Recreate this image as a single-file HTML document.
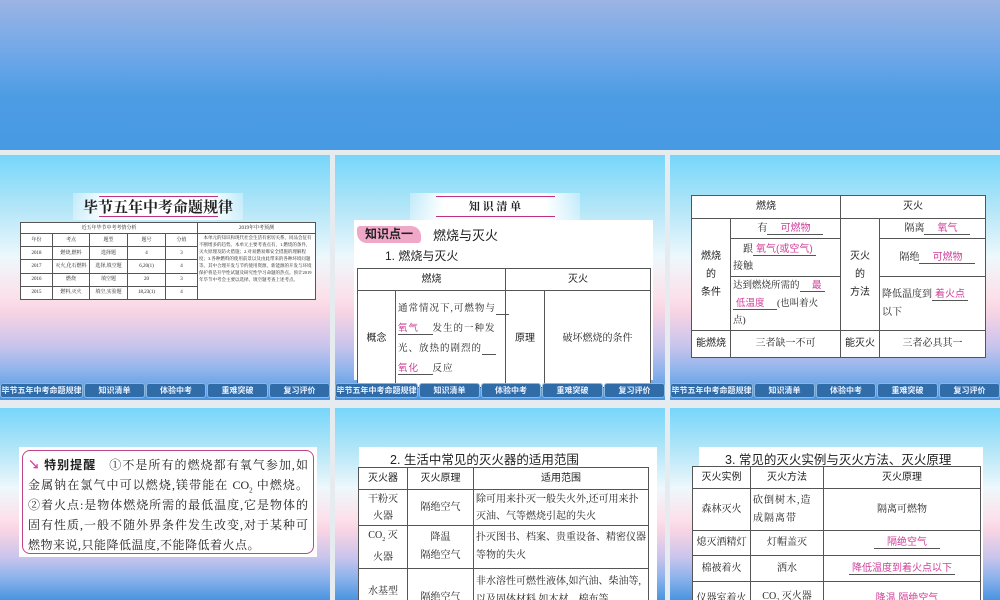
<!DOCTYPE html>
<html><head><meta charset="utf-8"><style>
*{margin:0;padding:0;box-sizing:border-box}
body{width:1000px;height:600px;overflow:hidden;background:#e6ebef;position:relative;font-family:"Liberation Serif","Noto Serif CJK SC",serif;color:#222}
.top{position:absolute;left:0;top:0;width:1000px;height:150px;background:linear-gradient(#9cb4e4 0%,#6aa6e8 40%,#4c9ce4 65%,#479ae2 100%)}
.s{position:absolute;width:330px;height:245px;overflow:hidden;background:linear-gradient(#76d6fa 0%,#b4e6f8 22%,#eef8fc 42%,#fce0ea 58%,#f8d4e4 64%,#c8c4ec 78%,#8eb4ec 88%,#4a94e0 100%)}
.a{position:absolute}
.nav{position:absolute;left:0;top:228px;width:330px;height:17px}
.nav div{position:absolute;top:0;height:15px;background:#306ca8;border:1px solid #8ab8e0;border-radius:3px;color:#e8f0ff;font:bold 8px "Liberation Sans","Noto Sans CJK SC",sans-serif;text-align:center;line-height:13px}
.ban{position:absolute;height:27px;background:linear-gradient(90deg,rgba(255,255,255,.3),#fff 20%,#fff 80%,rgba(255,255,255,.3));text-align:center;font:bold 14px "Noto Serif CJK SC",serif;color:#222;line-height:27px}
.ban:before,.ban:after{content:"";position:absolute;left:15%;right:15%;height:1px;background:#c03080}
.ban:before{top:3px}.ban:after{bottom:3px}
table{border-collapse:collapse;position:absolute;background:#fff;table-layout:fixed}
td{border:1px solid #555;text-align:center;font-size:10px;line-height:14px;padding:0 2px}
.h td{font-family:"Liberation Sans","Noto Sans CJK SC",sans-serif}
.sans{font-family:"Liberation Sans","Noto Sans CJK SC",sans-serif}
.pk{color:#d0409a;border-bottom:1px solid #555;padding:0 3px;font-family:"Liberation Sans","Noto Sans CJK SC",sans-serif}
.ln{white-space:nowrap;text-align:justify;text-align-last:justify;height:20px}
.t1 td{font-size:5px;line-height:7px;padding:0 1px}
</style></head><body>
<div class="top"></div>

<!-- slide 1 -->
<div class="s" style="left:0;top:155px">
 <div class="ban" style="left:73px;top:38px;width:170px;font-size:15px">毕节五年中考命题规律</div>
 <table class="t1" style="left:20px;top:67px;width:295px;height:78px">
  <colgroup><col style="width:32px"><col style="width:37px"><col style="width:38px"><col style="width:38px"><col style="width:32px"><col style="width:118px"></colgroup>
  <tr style="height:11px"><td colspan="5">近五年毕节中考考情分析</td><td>2019年中考预测</td></tr>
  <tr><td>年份</td><td>考点</td><td>题型</td><td>题号</td><td>分值</td><td rowspan="5" style="font-size:4.5px;line-height:7px;text-align:left;vertical-align:top">　本单元的知识和现代社会生活有密切关系，同品会征有不断增多的趋势。本单元主要考查点有，1.燃烧的条件，灭火原理及防火措施；2.对易燃易爆安全措施的理解程度；3.各种燃料的使用前景以及由此带来的各种环境问题等。其中合理开发与节约使用资源，新能源的开发与环境保护将是升学性试题及研究性学习命题的热点。预计2019年毕节中考会主要以选择、填空题考查上述考点。</td></tr>
  <tr><td>2018</td><td>燃烧,燃料</td><td>选择题</td><td>4</td><td>3</td></tr>
  <tr><td>2017</td><td style="white-space:nowrap">灭火,化石燃料</td><td>选择,填空题</td><td>6,20(1)</td><td>4</td></tr>
  <tr><td>2016</td><td>燃烧</td><td>填空题</td><td>20</td><td>3</td></tr>
  <tr><td>2015</td><td>燃料,灭火</td><td>填空,实验题</td><td>18,23(1)</td><td>4</td></tr>
 </table>
 <div class="nav"><div style="left:0;width:83px">毕节五年中考命题规律</div><div style="left:84px;width:61px">知识清单</div><div style="left:146px;width:60px">体验中考</div><div style="left:207px;width:61px">重难突破</div><div style="left:269px;width:61px">复习评价</div></div>
</div>

<!-- slide 2 -->
<div class="s" style="left:335px;top:155px">
 <div class="ban" style="left:75px;top:38px;width:170px;font-size:11px">知 识 清 单</div>
 <div class="a" style="left:19px;top:65px;width:299px;height:160px;background:#fff"></div>
 <div class="a sans" style="left:22px;top:71px;width:64px;height:17px;background:#f0a8c8;border-radius:3px 10px 3px 10px;font-weight:bold;font-size:12px;line-height:17px;text-align:center;color:#222">知识点一</div>
 <div class="a sans" style="left:98px;top:70px;font-size:13px">燃烧与灭火</div>
 <div class="a sans" style="left:50px;top:92px;font-size:12px">1. 燃烧与灭火</div>
 <table style="left:22px;top:113px;width:293px;height:120px">
  <colgroup><col style="width:38px"><col style="width:110px"><col style="width:39px"><col style="width:106px"></colgroup>
  <tr class="h" style="height:22px"><td colspan="2">燃烧</td><td colspan="2">灭火</td></tr>
  <tr><td class="sans">概念</td><td style="text-align:left;line-height:20px;letter-spacing:1px;font-size:9.5px">通常情况下,可燃物与<span class="pk">　氧气　</span>发生的一种发光、放热的剧烈的<span class="pk">　氧化　</span>反应</td><td class="sans">原理</td><td>破坏燃烧的条件</td></tr>
 </table>
 <div class="nav"><div style="left:0;width:83px">毕节五年中考命题规律</div><div style="left:84px;width:61px">知识清单</div><div style="left:146px;width:60px">体验中考</div><div style="left:207px;width:61px">重难突破</div><div style="left:269px;width:61px">复习评价</div></div>
</div>

<!-- slide 3 -->
<div class="s" style="left:670px;top:155px">
 <table style="left:21px;top:40px;width:294px;height:163px">
  <colgroup><col style="width:39px"><col style="width:110px"><col style="width:39px"><col style="width:106px"></colgroup>
  <tr class="h" style="height:23px"><td colspan="2">燃烧</td><td colspan="2">灭火</td></tr>
  <tr style="height:20px"><td rowspan="3" class="sans" style="line-height:18px">燃烧<br>的<br>条件</td><td>有<span class="pk">　可燃物　</span></td><td rowspan="3" class="sans" style="line-height:18px">灭火<br>的<br>方法</td><td>隔离<span class="pk">　氧气　</span></td></tr>
  <tr style="height:38px"><td style="text-align:left;line-height:17px">　跟<span class="pk">氧气(或空气)</span><br>接触</td><td>隔绝<span class="pk">　可燃物　</span></td></tr>
  <tr style="height:52px"><td style="text-align:left;line-height:17px;font-size:9.5px">达到燃烧所需的<span class="pk">　最</span><br><span class="pk">低温度　</span>(也叫着火<br>点)</td><td style="text-align:left;line-height:18px">降低温度到<span class="pk">着火点</span><br>以下</td></tr>
  <tr style="height:27px"><td class="sans">能燃烧</td><td>三者缺一不可</td><td class="sans">能灭火</td><td>三者必具其一</td></tr>
 </table>
 <div class="nav"><div style="left:0;width:83px">毕节五年中考命题规律</div><div style="left:84px;width:61px">知识清单</div><div style="left:146px;width:60px">体验中考</div><div style="left:207px;width:61px">重难突破</div><div style="left:269px;width:61px">复习评价</div></div>
</div>

<!-- slide 4 -->
<div class="s" style="left:0;top:408px;height:192px">
 <div class="a" style="left:19px;top:39px;width:298px;height:110px;background:#fff"></div>
 <div class="a" style="left:22px;top:42px;width:292px;height:104px;border:1.5px solid #c0448a;border-radius:8px"></div>
 <div class="a" style="left:28px;top:48px;width:280px;font-size:12px;line-height:19px">
  <div class="ln"><span class="sans" style="color:#d0409a;font-weight:bold">↘</span> <b class="sans">特别提醒</b>　①不是所有的燃烧都有氧气参加,如</div>
  <div class="ln">金属钠在氯气中可以燃烧,镁带能在 CO<sub style="font-size:7px">2</sub> 中燃烧。</div>
  <div class="ln">②着火点:是物体燃烧所需的最低温度,它是物体的</div>
  <div class="ln">固有性质,一般不随外界条件发生改变,对于某种可</div>
  <div style="white-space:nowrap;letter-spacing:0.5px">燃物来说,只能降低温度,不能降低着火点。</div>
 </div>
</div>

<!-- slide 5 -->
<div class="s" style="left:335px;top:408px;height:192px">
 <div class="a" style="left:24px;top:39px;width:298px;height:160px;background:#fff"></div>
 <div class="a sans" style="left:55px;top:41px;font-size:12.5px">2. 生活中常见的灭火器的适用范围</div>
 <table style="left:23px;top:59px;width:290px;height:160px">
  <colgroup><col style="width:49px"><col style="width:66px"><col style="width:175px"></colgroup>
  <tr class="h" style="height:22px"><td>灭火器</td><td>灭火原理</td><td>适用范围</td></tr>
  <tr style="height:36px"><td style="line-height:17px">干粉灭<br>火器</td><td>隔绝空气</td><td style="text-align:left;line-height:17px">除可用来扑灭一般失火外,还可用来扑灭油、气等燃烧引起的失火</td></tr>
  <tr style="height:43px"><td style="line-height:18px">CO<sub style="font-size:6px">2</sub> 灭<br>火器</td><td style="line-height:18px">降温<br>隔绝空气</td><td style="text-align:left;line-height:18px">扑灭图书、档案、贵重设备、精密仪器等物的失火</td></tr>
  <tr><td style="vertical-align:top;padding-top:16px">水基型</td><td>隔绝空气</td><td style="text-align:left;vertical-align:top;line-height:18px;padding-top:4px">非水溶性可燃性液体,如汽油、柴油等,以及固体材料,如木材、棉布等</td></tr>
 </table>
</div>

<!-- slide 6 -->
<div class="s" style="left:670px;top:408px;height:192px">
 <div class="a" style="left:29px;top:39px;width:284px;height:160px;background:#fff"></div>
 <div class="a sans" style="left:55px;top:41px;font-size:12.5px">3. 常见的灭火实例与灭火方法、灭火原理</div>
 <table style="left:22px;top:58px;width:288px;height:150px">
  <colgroup><col style="width:58px"><col style="width:73px"><col style="width:157px"></colgroup>
  <tr class="h" style="height:22px"><td>灭火实例</td><td>灭火方法</td><td>灭火原理</td></tr>
  <tr style="height:42px"><td>森林灭火</td><td style="text-align:left;line-height:18px;letter-spacing:1px">砍倒树木,造成隔离带</td><td>隔离可燃物</td></tr>
  <tr style="height:25px"><td>熄灭酒精灯</td><td>灯帽盖灭</td><td><span class="pk">　隔绝空气　</span></td></tr>
  <tr style="height:26px"><td>棉被着火</td><td>洒水</td><td><span class="pk">降低温度到着火点以下</span></td></tr>
  <tr><td>仪器室着火</td><td>CO<sub style="font-size:6px">2</sub> 灭火器</td><td><span class="pk">　降温,隔绝空气　</span></td></tr>
 </table>
</div>
</body></html>
